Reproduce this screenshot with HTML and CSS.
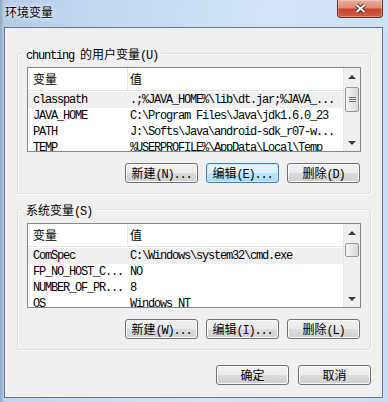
FILE: index.html
```html
<!DOCTYPE html>
<html lang="zh-CN">
<head>
    <meta charset="UTF-8">
    <title>环境变量</title>
    <link rel="stylesheet" href="styles.css">
</head>
<body>
    <div class="window">
        <div class="titlebar">
            <span class="title">环境变量</span>
            <button class="close">
                <svg width="13" height="11" viewBox="0 0 13 11">
                    <path d="M2.5 2 L10.5 9 M10.5 2 L2.5 9" stroke="#4a231c" stroke-width="4.2" fill="none"/>
                    <path d="M2.5 2 L10.5 9 M10.5 2 L2.5 9" stroke="#fff" stroke-width="2.2" fill="none"/>
                </svg>
            </button>
        </div>

        <div class="client">
            <!-- user variables -->
            <div class="group">
                <div class="group-title"><span class="en">chunting </span>的用户变量<span class="en">(U)</span></div>
                <div class="listbox">
                    <div class="list">
                        <div class="row head"><span class="c1">变量</span><span class="c2">值</span></div>
                        <div class="row sel"><span class="c1">classpath</span><span class="c2">.;%JAVA_HOME%\lib\dt.jar;%JAVA_...</span></div>
                        <div class="row"><span class="c1">JAVA_HOME</span><span class="c2">C:\Program Files\Java\jdk1.6.0_23</span></div>
                        <div class="row"><span class="c1">PATH</span><span class="c2">J:\Softs\Java\android-sdk_r07-w...</span></div>
                        <div class="row"><span class="c1">TEMP</span><span class="c2">%USERPROFILE%\AppData\Local\Temp</span></div>
                    </div>
                    <div class="scrollbar">
                        <div class="arrow up"></div>
                        <div class="track"><div class="thumb"><span class="grip"></span></div></div>
                        <div class="arrow down"></div>
                    </div>
                </div>
                <div class="buttons">
                    <button class="btn">新建<span class="en">(N)...</span></button>
                    <button class="btn focus">编辑<span class="en">(E)...</span></button>
                    <button class="btn">删除<span class="en">(D)</span></button>
                </div>
            </div>

            <!-- system variables -->
            <div class="group">
                <div class="group-title">系统变量<span class="en">(S)</span></div>
                <div class="listbox">
                    <div class="list">
                        <div class="row head"><span class="c1">变量</span><span class="c2">值</span></div>
                        <div class="row sel"><span class="c1">ComSpec</span><span class="c2">C:\Windows\system32\cmd.exe</span></div>
                        <div class="row"><span class="c1">FP_NO_HOST_C...</span><span class="c2">NO</span></div>
                        <div class="row"><span class="c1">NUMBER_OF_PR...</span><span class="c2">8</span></div>
                        <div class="row"><span class="c1">OS</span><span class="c2">Windows_NT</span></div>
                    </div>
                    <div class="scrollbar">
                        <div class="arrow up"></div>
                        <div class="track"><div class="thumb small"></div></div>
                        <div class="arrow down"></div>
                    </div>
                </div>
                <div class="buttons">
                    <button class="btn">新建<span class="en">(W)...</span></button>
                    <button class="btn">编辑<span class="en">(I)...</span></button>
                    <button class="btn">删除<span class="en">(L)</span></button>
                </div>
            </div>

            <div class="dialog-buttons">
                <button class="btn">确定</button>
                <button class="btn">取消</button>
            </div>
        </div>
    </div>
</body>
</html>
```

FILE: styles.css
```css
body {
    margin: 0;
    font-family: "Noto Sans CJK SC", sans-serif;
    font-size: 12px;
    color: #000;
}

.window {
    width: 388px;
    height: 402px;
    display: flex;
    flex-direction: column;
    background:
        linear-gradient(to right, #8ea9c6 0, #a9c2dc 3px, transparent 4px),
        linear-gradient(100deg, #b3cbe6 0%, #c4daf1 25%, #d3e6f8 60%, #c9def4 100%);
}

.titlebar {
    height: 27px;
    display: flex;
    align-items: flex-start;
    flex-shrink: 0;
}

.title {
    padding: 4px 0 0 5px;
    line-height: 16px;
    text-shadow: 0 0 6px #fff, 0 0 3px #fff;
}

/* Close button */
.close {
    margin-left: auto;
    margin-right: 5px;
    width: 46px;
    height: 18px;
    padding: 0;
    border: 1px solid #6a2f26;
    border-top: none;
    border-radius: 0 0 4px 4px;
    background: linear-gradient(#e9ab9c 0%, #dc8c7a 45%, #c8442f 55%, #d35d44 100%);
    box-shadow: inset 0 0 0 1px rgba(255, 255, 255, 0.3);
    display: flex;
    align-items: center;
    justify-content: center;
}

.client {
    margin: 0 5px 0 4px;
    height: 371px;
    box-sizing: border-box;
    border: 1px solid #6b7785;
    background: #f0f0f0;
    padding-top: 25px;
}

/* Group box */
.group {
    margin: 0 11px 0 12px;
    padding: 0 9px 10px 9px;
    border: 1px solid #d5dfe5;
    border-radius: 3px;
    box-shadow: inset 1px 1px 0 #fff, 1px 1px 0 #fff;
}

.group + .group {
    margin-top: 15px;
}

.group-title {
    width: fit-content;
    height: 13px;
    line-height: 13px;
    margin: -7px 0 0 -5px;
    padding: 0 4px;
    background: #f0f0f0;
    white-space: pre;
}

.en {
    font-family: "Liberation Mono", monospace;
    font-size: 12px;
    letter-spacing: -1.2px;
}

/* List view */
.listbox {
    margin-top: 7px;
    height: 85px;
    box-sizing: border-box;
    border: 1px solid #828790;
    background: #fff;
    display: flex;
}

.list {
    flex: 1;
    overflow: hidden;
}

.row {
    display: flex;
    height: 16px;
    line-height: 16px;
    font-family: "Liberation Mono", monospace;
    font-size: 12px;
    letter-spacing: -1.2px;
    white-space: nowrap;
}

.c1 {
    width: 100px;
    padding-left: 5px;
    box-sizing: border-box;
    flex-shrink: 0;
}

.c2 {
    padding-left: 2px;
}

.head {
    height: 23px;
    line-height: 22px;
    box-sizing: border-box;
    border-bottom: 1px solid #e5e5e5;
    margin-bottom: 1px;
    font-family: "Noto Sans CJK SC", sans-serif;
    font-size: 12px;
    letter-spacing: 0;
}

.head .c1 {
    border-right: 1px solid #e5e5e5;
}

.sel {
    background: #f0f0f0;
}

/* Scrollbar */
.scrollbar {
    width: 17px;
    display: flex;
    flex-direction: column;
    background: #f0f0f0;
    box-shadow: inset 1px 0 0 #e6e6e6;
}

.arrow {
    height: 17px;
    display: flex;
    align-items: center;
    justify-content: center;
}

.arrow::before {
    content: "";
    border-left: 4px solid transparent;
    border-right: 4px solid transparent;
}

.arrow.up::before {
    border-bottom: 4px solid #3c3c3c;
}

.arrow.down::before {
    border-top: 4px solid #3c3c3c;
}

.track {
    flex: 1;
    padding: 2px 1px 0 2px;
}

.thumb {
    height: 25px;
    box-sizing: border-box;
    border: 1px solid #979797;
    border-radius: 2px;
    background: linear-gradient(to right, #f4f4f4, #e8e8e8 50%, #d8d8d8);
    display: flex;
    align-items: center;
    justify-content: center;
}

.thumb.small {
    height: 14px;
}

.grip {
    width: 7px;
    height: 5px;
    background: repeating-linear-gradient(#6f6f6f 0 1px, transparent 1px 2px);
}

/* Buttons */
.buttons {
    display: flex;
    justify-content: flex-end;
    gap: 8px;
    margin: 11px 1px 0 0;
}

.dialog-buttons {
    display: flex;
    justify-content: flex-end;
    gap: 9px;
    margin: 15px 11px 0 0;
}

.btn {
    width: 73px;
    height: 20px;
    box-sizing: border-box;
    padding: 0;
    border: 1px solid #707070;
    border-radius: 3px;
    background: linear-gradient(#f2f2f2 0%, #ebebeb 50%, #dddddd 50%, #cfcfcf 100%);
    box-shadow: inset 0 0 0 1px #fcfcfc;
    font-family: "Noto Sans CJK SC", sans-serif;
    font-size: 12px;
    line-height: 18px;
    color: #000;
    white-space: nowrap;
}

.btn.focus {
    border-color: #3c7fb1;
    background: linear-gradient(#eaf6fd 0%, #d9f0fc 50%, #bee6fd 50%, #a7d9f5 100%);
    box-shadow: inset 0 0 0 1px #c9eafc;
}
```
